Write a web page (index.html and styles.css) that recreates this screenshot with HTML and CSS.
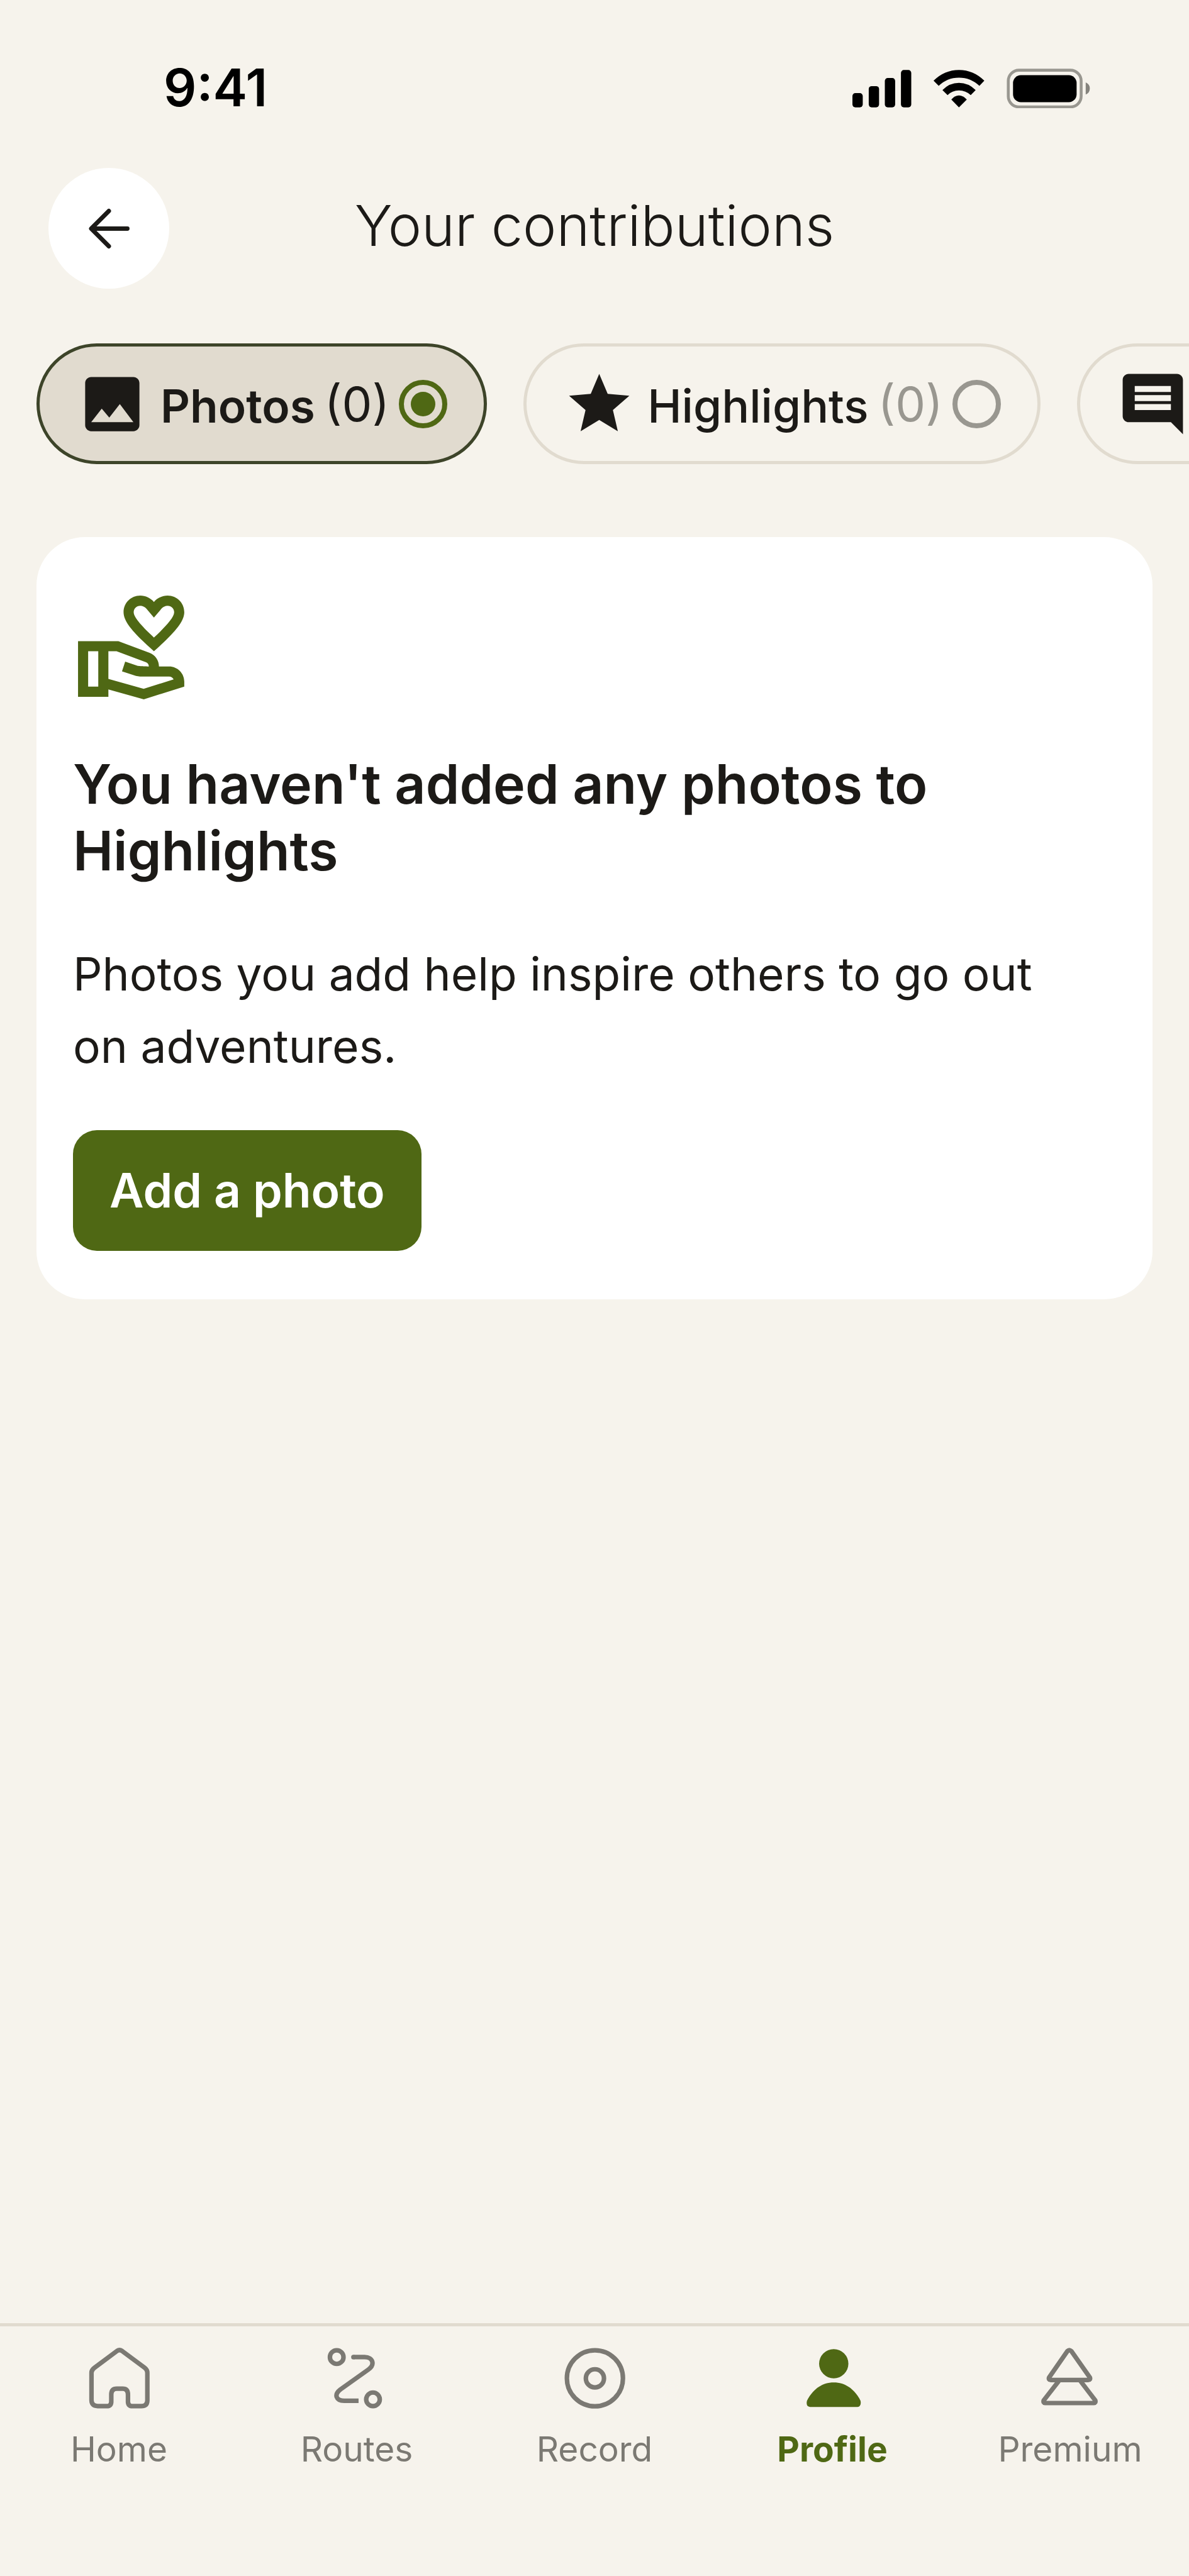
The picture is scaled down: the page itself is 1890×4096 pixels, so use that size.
FILE: index.html
```html
<!DOCTYPE html>
<html lang="en">
<head>
<meta charset="utf-8">
<meta name="viewport" content="width=device-width, initial-scale=1">
<title>Your contributions</title>
<link rel="stylesheet" href="styles.css">
</head>
<body>
<div class="status-bar">
  <span class="time">9:41</span>
  <svg class="status-icons" viewBox="52 30 1152 192" role="img" aria-label="Signal, Wi-Fi and battery full">
    <rect x="52" y="149" width="50" height="69" rx="14"/>
    <rect x="131" y="115" width="50" height="103" rx="14"/>
    <rect x="209" y="76" width="50" height="142" rx="14"/>
    <rect x="287" y="37" width="50" height="181" rx="14"/>
    <path d="M445 89Q498 37 568 37T691 89L667 114Q626 74 568 74T470 114Z"/>
    <path d="M488 134Q522 99 568 99T649 134L625 159Q601 136 568 136T513 159Z"/>
    <path d="M531 180Q547 160 568 160T606 180L568 218Z"/>
    <rect class="battery-frame" x="807" y="38" width="353" height="178" rx="52"/>
    <rect x="830" y="62" width="308" height="131" rx="38"/>
    <path class="battery-tip" d="M1182 97Q1202 106 1202 126.500T1182 156Z"/>
  </svg>
</div>

<header class="app-header">
  <button class="back" type="button" aria-label="Back">
    <svg class="icon" viewBox="0 0 117 117" aria-hidden="true"><path class="line" d="M88 58.500H30M58 30L29.500 58.500L58 87"/></svg>
  </button>
  <h1 class="page-title">Your contributions</h1>
</header>

<form class="filters" aria-label="Contribution type">
  <label class="chip chip-selected">
    <svg class="icon" viewBox="0 0 24 24" aria-hidden="true"><path d="M21 19V5c0-1.100-.9-2-2-2H5c-1.100 0-2 .9-2 2v14c0 1.100.9 2 2 2h14c1.100 0 2-.9 2-2zM8.500 13.500l2.500 3.010L14.500 12l4.500 6H5l3.500-4.500z"/></svg>
    <span class="chip-name">Photos</span>
    <span class="chip-count">(0)</span>
    <input class="radio" type="radio" name="type" value="photos" checked>
  </label>
  <label class="chip">
    <svg class="icon" viewBox="0 0 24 24" aria-hidden="true"><path d="M12 17.270L18.180 21l-1.640-7.030L22 9.240l-7.190-.61L12 2 9.190 8.630 2 9.240l5.460 4.730L5.820 21z"/></svg>
    <span class="chip-name">Highlights</span>
    <span class="chip-count">(0)</span>
    <input class="radio" type="radio" name="type" value="highlights">
  </label>
  <label class="chip">
    <svg class="icon" viewBox="0 0 24 24" aria-hidden="true"><path d="M21.990 4c0-1.100-.89-2-1.990-2H4c-1.100 0-2 .9-2 2v12c0 1.100.9 2 2 2h14l4 4-.01-18zM18 14H6v-2h12v2zm0-3H6V9h12v2zm0-3H6V6h12v2z"/></svg>
    <input class="radio" type="radio" name="type" value="comments" aria-label="Comments">
  </label>
</form>

<main class="content">
  <section class="card">
    <svg class="card-icon" viewBox="0 0 24 24" aria-hidden="true"><path d="M16 13c3.090-2.810 6-5.440 6-7.700C22 3.450 20.550 2 18.700 2c-1.040 0-2.050.49-2.700 1.250C15.340 2.490 14.340 2 13.300 2 11.450 2 10 3.450 10 5.300c0 2.260 2.910 4.890 6 7.700zm-2.700-9c.44 0 .89.21 1.180.55L16 6.340l1.520-1.790c.29-.34.74-.55 1.180-.55.74 0 1.300.56 1.300 1.300 0 1.120-2.040 3.170-4 4.990-1.960-1.820-4-3.880-4-4.990 0-.74.56-1.300 1.300-1.300zM19 16h-2c0-1.200-.75-2.280-1.870-2.700L8.970 11H1v11h6v-1.440l7 1.940 8-2.500v-1c0-1.660-1.340-3-3-3zM3 20v-7h2v7H3zm10.970.41L7 18.480V13h1.610l5.820 2.170c.34.13.57.46.57.83 0 0-1.990-.05-2.300-.15l-2.380-.79-.63 1.900 2.380.79c.51.17 1.040.26 1.580.26H19c.39 0 .74.23.9.56l-5.930 1.840z"/></svg>
    <h2 class="card-title">You haven't added any photos to Highlights</h2>
    <p class="card-text">Photos you add help inspire others to go out on adventures.</p>
    <button class="primary" type="button">Add a photo</button>
  </section>
</main>

<nav class="tab-bar" aria-label="Main">
  <a class="tab" href="#home">
    <svg class="icon" viewBox="10 8 351 351" aria-hidden="true"><path class="line thick" d="M175 51Q187 43 199 51L309 133Q322 143 322 157V292Q321 319 293 319H250Q228 319 228 297V263Q228 234 202 234H174Q147 234 147 263V297Q147 319 125 319H81Q52 318 51 291V157Q51 143 65 133Z"/></svg>
    Home
  </a>
  <a class="tab" href="#routes">
    <svg class="icon" viewBox="1161 8 351 351" aria-hidden="true"><path class="line thick" d="M1319 81H1373C1416 81 1424 119 1391 142L1256 238C1224 263 1234 293 1274 293H1344"/><circle cx="1319" cy="81" r="11"/><circle class="line thick" cx="1238" cy="81" r="33"/><circle class="line thick" cx="1414" cy="286" r="33"/></svg>
    Routes
  </a>
  <a class="tab" href="#record">
    <svg class="icon" viewBox="0 0 351 351" aria-hidden="true"><circle class="line thick" cx="176" cy="176" r="136"/><circle class="line thick" cx="176" cy="176" r="44"/></svg>
    Record
  </a>
  <a class="tab tab-current" href="#profile" aria-current="page">
    <svg class="icon" viewBox="-13 8 351 351" aria-hidden="true"><circle cx="168" cy="113" r="71"/><path d="M38 293C62 245 104 204 168 204S274 245 298 293Q303 321 283 323H53Q32 321 38 293Z"/></svg>
    Profile
  </a>
  <a class="tab" href="#premium">
    <svg class="icon" viewBox="1138 8 351 351" aria-hidden="true"><path class="line thick" d="M1299 52Q1308 43 1318 52L1408 180Q1412 191 1401 192H1217Q1206 191 1210 180ZM1257 197L1184 291Q1180 303 1191 304H1427Q1438 303 1434 291L1362 197"/></svg>
    Premium
  </a>
</nav>
</body>
</html>
```
FILE: styles.css
```css
:root {
  --bg: #f6f3ec;
  --ink: #1c1a17;
  --sand: #e1dbcf;
  --green: #4f6814;
  --muted: #7b7973;
}

* {
  box-sizing: border-box;
}

body {
  margin: 0;
  min-height: 100vh;
  display: flex;
  flex-direction: column;
  background: var(--bg);
  color: var(--ink);
  font-family: Inter, "Liberation Sans", sans-serif;
  overflow-x: hidden;
}

button {
  border: 0;
  font-family: inherit;
}

.icon {
  display: block;
  flex: none;
  width: 115px;
  height: 115px;
  fill: currentColor;
}

.line {
  fill: none;
  stroke: currentColor;
  stroke-width: 7px;
  stroke-linecap: round;
  stroke-linejoin: round;
}

.thick {
  stroke-width: 22px;
  stroke-linecap: butt;
}

.status-bar {
  display: flex;
  justify-content: space-between;
  align-items: center;
  height: 267px;
  padding: 13px 157px 0 260px;
  color: #000;
}

.time {
  font-size: 82px;
  line-height: 96px;
  font-weight: 600;
}

.status-icons {
  width: 378px;
  height: 63px;
}

.battery-frame {
  fill: none;
  stroke: #999790;
  stroke-width: 14px;
}

.battery-tip {
  fill: #85837d;
}

.app-header {
  display: grid;
  grid-template-columns: 192px 1fr 192px;
  padding: 0 77px;
}

.back {
  display: grid;
  place-items: center;
  width: 192px;
  height: 192px;
  padding: 0;
  border-radius: 50%;
  background: #fff;
  color: var(--ink);
}

.page-title {
  margin: 0;
  font-size: 90px;
  line-height: 184px;
  font-weight: 300;
  text-align: center;
}

.filters {
  display: flex;
  gap: 58px;
  padding: 87px 0 0 58px;
  overflow: hidden;
}

.chip {
  display: flex;
  flex: none;
  align-items: center;
  gap: 15px;
  height: 192px;
  padding: 0 58px;
  border: 5px solid var(--sand);
  border-radius: 96px;
}

.chip-selected {
  border-color: #3d4429;
  background: var(--sand);
}

.chip-name {
  padding: 8px 0 0 4px;
  font-size: 73px;
  line-height: 96px;
  font-weight: 500;
}

.chip-selected .chip-name {
  font-weight: 600;
}

.chip-count {
  font-size: 76px;
  line-height: 96px;
  font-weight: 400;
  color: #999790;
}

.chip-selected .chip-count {
  color: var(--ink);
}

.radio {
  appearance: none;
  display: grid;
  place-items: center;
  width: 77px;
  height: 77px;
  margin: 0;
  border: 8px solid #999790;
  border-radius: 50%;
}

.radio:checked {
  border-color: var(--green);
}

.radio:checked::before {
  content: "";
  width: 39px;
  height: 39px;
  border-radius: 50%;
  background: var(--green);
}

.content {
  flex: 1;
  padding: 116px 58px;
}

.card {
  padding: 77px 58px;
  border-radius: 77px;
  background: #fff;
}

.card-icon {
  display: block;
  width: 193px;
  height: 193px;
  fill: var(--green);
}

.card-title {
  margin: 70px 0 0;
  font-size: 86px;
  line-height: 106px;
  font-weight: 600;
}

.card-text {
  max-width: 1600px;
  margin: 85px 0 0;
  font-size: 73px;
  line-height: 115px;
}

.primary {
  display: block;
  height: 192px;
  margin-top: 76px;
  padding: 0 58px;
  border-radius: 38px;
  background: var(--green);
  color: #fff;
  font-size: 75px;
  line-height: 96px;
  font-weight: 600;
}

.tab-bar {
  display: grid;
  grid-template-columns: repeat(5, 1fr);
  padding: 25px 0 166px;
  border-top: 5px solid var(--sand);
}

.tab {
  display: flex;
  flex-direction: column;
  align-items: center;
  gap: 19px;
  color: var(--muted);
  font-size: 55px;
  line-height: 72px;
  text-decoration: none;
}

.tab-current {
  color: var(--green);
  font-weight: 700;
}
```
